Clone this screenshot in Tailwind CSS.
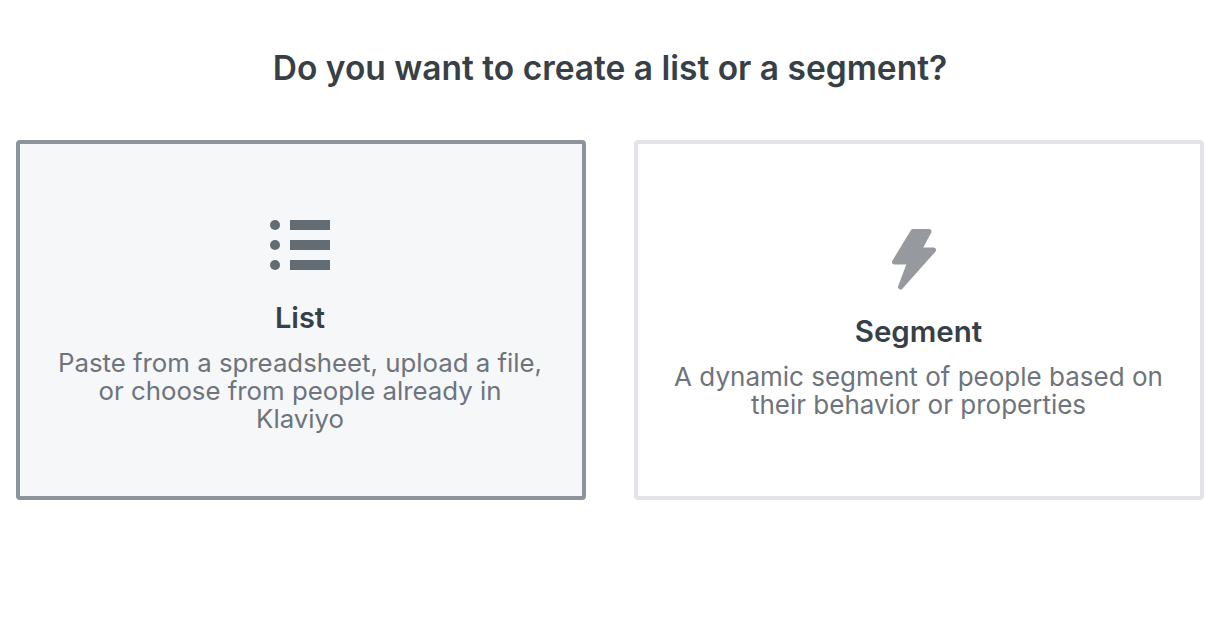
<!DOCTYPE html>
<html lang="en">
<head>
    <meta charset="UTF-8">
    <title>Create a list or segment</title>
    <script src="https://cdn.jsdelivr.net/npm/@tailwindcss/browser@4"></script>
</head>
<body class="bg-white font-['Inter','Liberation_Sans',sans-serif]">
    <div class="w-[1220px] h-[630px] overflow-hidden px-4">
        <h1 class="pt-[48px] text-center text-[33.5px] leading-[41px] font-semibold text-[#373f47]">Do you want to create a list or a segment?</h1>
        <div class="flex gap-12 mt-[51px]">
            <!-- List -->
            <button class="w-[570px] h-[360px] pt-[13px] flex flex-col items-center justify-center border-4 border-[#8d939b] rounded bg-[#f6f7f9]">
                <svg class="w-[60px] h-[50px] mr-[2px]" viewBox="0 0 60 50" fill="#636b73">
                    <circle cx="5" cy="5" r="5"/><circle cx="5" cy="25" r="5"/><circle cx="5" cy="45" r="5"/>
                    <rect x="20" y="0" width="40" height="10"/><rect x="20" y="20" width="40" height="10"/><rect x="20" y="40" width="40" height="10"/>
                </svg>
                <div class="mt-[30px] mr-[2px] text-[29px] leading-[36px] font-semibold text-[#373f47]">List</div>
                <p class="mt-[13px] mr-[2px] w-[490px] text-[25.8px] leading-[28px] text-[#6d747c]">Paste from a spreadsheet, upload a file, or choose from people already in Klaviyo</p>
            </button>
            <!-- Segment -->
            <button class="w-[570px] h-[360px] pt-[8px] flex flex-col items-center justify-center border-4 border-[#e3e4e9] rounded bg-white">
                <svg class="w-[44px] h-[61px] mr-[10px]" viewBox="0 0 44 61" fill="#969a9f">
                    <path d="M21 2.5H37L27 21H41.5L8.5 58 18 33H2.5z" stroke="#969a9f" stroke-width="5" stroke-linejoin="round"/>
                </svg>
                <div class="mt-[23px] mr-[1px] text-[29.5px] leading-[36px] font-semibold text-[#373f47]">Segment</div>
                <p class="mt-[14px] mr-[1px] w-[496px] text-[26px] leading-[28px] text-[#6d747c]">A dynamic segment of people based on their behavior or properties</p>
            </button>
        </div>
    </div>
</body>
</html>
